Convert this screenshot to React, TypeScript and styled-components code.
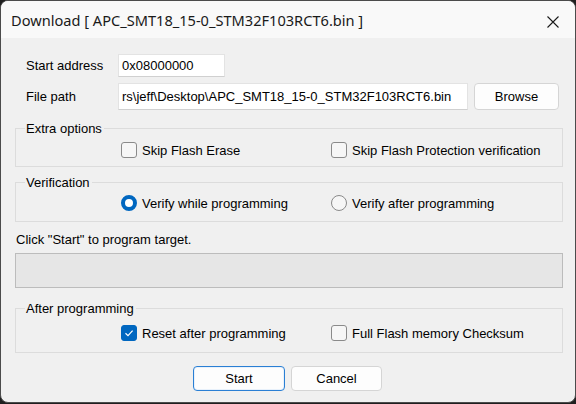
import React from "react";
import styled, { createGlobalStyle } from "styled-components";

const Global = createGlobalStyle`
  html, body { margin: 0; padding: 0; background: #1f1f1f; }
  #root { width: 576px; height: 404px; }
`;

const Window = styled.div`
  box-sizing: border-box;
  width: 576px;
  height: 403px;
  border: 1px solid #4b4b4b;
  border-radius: 8px;
  overflow: hidden;
  background: #f0f0f0;
  display: flex;
  flex-direction: column;
  font-family: "Liberation Sans", Arial, sans-serif;
  font-size: 13px;
  color: #000;
`;

const TitleBar = styled.div`
  height: 37px;
  flex: none;
  background: #f9f9f9;
  display: flex;
  align-items: center;
  justify-content: space-between;
  padding: 0 14px 0 10px;
  font-family: "Noto Sans", "Open Sans", sans-serif;
  font-size: 14.6px;
  color: #1a1a1a;
`;

const Title = styled.span`
  padding-top: 1px;
`;

const CloseIcon = styled.svg`
  width: 12px;
  height: 12px;
  margin-right: 2px;
  margin-top: 5px;
`;

const Body = styled.div`
  flex: 1;
  display: flex;
  flex-direction: column;
  padding: 0 12px 0 14px;
`;

const FieldRow = styled.div<{ $top: number }>`
  display: flex;
  align-items: center;
  gap: 6px;
  margin-top: ${(p) => p.$top}px;
`;

const FieldLabel = styled.span`
  width: 92px;
  padding-left: 11px;
  flex: none;
`;

const TextBox = styled.div<{ $w: number; $h: number }>`
  box-sizing: border-box;
  width: ${(p) => p.$w}px;
  height: ${(p) => p.$h}px;
  background: #fff;
  border: 1px solid #e3e3e3;
  border-bottom-color: #d0d0d0;
  display: flex;
  align-items: center;
  padding-left: 3px;
  overflow: hidden;
  white-space: nowrap;
  margin-left: -6px;
`;

const Button = styled.button<{ $primary?: boolean; $w: number; $h: number }>`
  box-sizing: border-box;
  width: ${(p) => p.$w}px;
  height: ${(p) => p.$h}px;
  background: #fdfdfd;
  border: 1px solid ${(p) => (p.$primary ? "#2a7fd4" : "#d5d5d5")};
  box-shadow: ${(p) => (p.$primary ? "inset 0 0 0 1px #e8f1fb" : "none")};
  border-radius: 4px;
  font-family: "Liberation Sans", Arial, sans-serif;
  font-size: 13px;
  color: #000;
  padding: 0;
`;

const Group = styled.fieldset<{ $top: number; $pt: number; $pb: number }>`
  margin: ${(p) => p.$top}px 0 0 0;
  padding: ${(p) => p.$pt}px 0 ${(p) => p.$pb}px 0;
  border: 1px solid #dcdcdc;
  border-radius: 0;
  min-width: 0;
`;

const Legend = styled.legend`
  margin-left: 9px;
  padding: 0 2px 0 1px;
  line-height: 15px;
`;

const Options = styled.div`
  display: grid;
  grid-template-columns: 210px 1fr;
  padding-left: 105px;
  height: 16px;
`;

const Option = styled.label`
  display: flex;
  align-items: center;
  gap: 5px;
  height: 16px;
  white-space: nowrap;
`;

const Box = styled.span<{ $checked?: boolean }>`
  box-sizing: border-box;
  width: 16px;
  height: 16px;
  flex: none;
  border-radius: 3px;
  border: 1px solid ${(p) => (p.$checked ? "#0067c0" : "#8a8a8a")};
  background: ${(p) => (p.$checked ? "#0067c0" : "#f6f6f6")};
  display: flex;
  align-items: center;
  justify-content: center;
`;

const Radio = styled.span<{ $checked?: boolean }>`
  box-sizing: border-box;
  width: 16px;
  height: 16px;
  flex: none;
  border-radius: 50%;
  border: ${(p) => (p.$checked ? "4px solid #0067c0" : "1px solid #8a8a8a")};
  background: ${(p) => (p.$checked ? "#ffffff" : "#f6f6f6")};
`;

const Status = styled.div`
  margin-top: 10px;
  line-height: 15px;
  padding-left: 1px;
`;

const Progress = styled.div`
  box-sizing: border-box;
  margin-top: 6px;
  height: 35px;
  background: #e6e6e6;
  border: 1px solid #bcbcbc;
`;

const ButtonBar = styled.div`
  display: flex;
  justify-content: center;
  gap: 6px;
  margin-top: 13px;
  padding-right: 3px;
`;

const Check = () => (
  <svg width="10" height="10" viewBox="0 0 10 10">
    <path d="M1.5 5.2 L4 7.6 L8.6 2.6" fill="none" stroke="#fff" strokeWidth="1.2" />
  </svg>
);

export default function App() {
  return (
    <>
      <Global />
      <Window>
        <TitleBar>
          <Title>Download [ APC_SMT18_15-0_STM32F103RCT6.bin ]</Title>
          <CloseIcon viewBox="0 0 12 12">
            <path d="M0.5 0.5 L11.5 11.5 M11.5 0.5 L0.5 11.5" stroke="#1a1a1a" strokeWidth="1.1" />
          </CloseIcon>
        </TitleBar>
        <Body>
          <FieldRow $top={16}>
            <FieldLabel>Start address</FieldLabel>
            <TextBox $w={107} $h={23}>0x08000000</TextBox>
          </FieldRow>
          <FieldRow $top={6}>
            <FieldLabel>File path</FieldLabel>
            <TextBox $w={350} $h={27}>
              rs\jeff\Desktop\APC_SMT18_15-0_STM32F103RCT6.bin
            </TextBox>
            <Button $w={85} $h={27}>Browse</Button>
          </FieldRow>
          <Group $top={11} $pt={6} $pb={8}>
            <Legend>Extra options</Legend>
            <Options>
              <Option>
                <Box />
                Skip Flash Erase
              </Option>
              <Option>
                <Box />
                Skip Flash Protection verification
              </Option>
            </Options>
          </Group>
          <Group $top={8} $pt={5} $pb={10}>
            <Legend>Verification</Legend>
            <Options>
              <Option>
                <Radio $checked />
                Verify while programming
              </Option>
              <Option>
                <Radio />
                Verify after programming
              </Option>
            </Options>
          </Group>
          <Status>Click "Start" to program target.</Status>
          <Progress />
          <Group $top={13} $pt={9} $pb={11}>
            <Legend>After programming</Legend>
            <Options>
              <Option>
                <Box $checked>
                  <Check />
                </Box>
                Reset after programming
              </Option>
              <Option>
                <Box />
                Full Flash memory Checksum
              </Option>
            </Options>
          </Group>
          <ButtonBar>
            <Button $primary $w={92} $h={25}>Start</Button>
            <Button $w={91} $h={25}>Cancel</Button>
          </ButtonBar>
        </Body>
      </Window>
    </>
  );
}
